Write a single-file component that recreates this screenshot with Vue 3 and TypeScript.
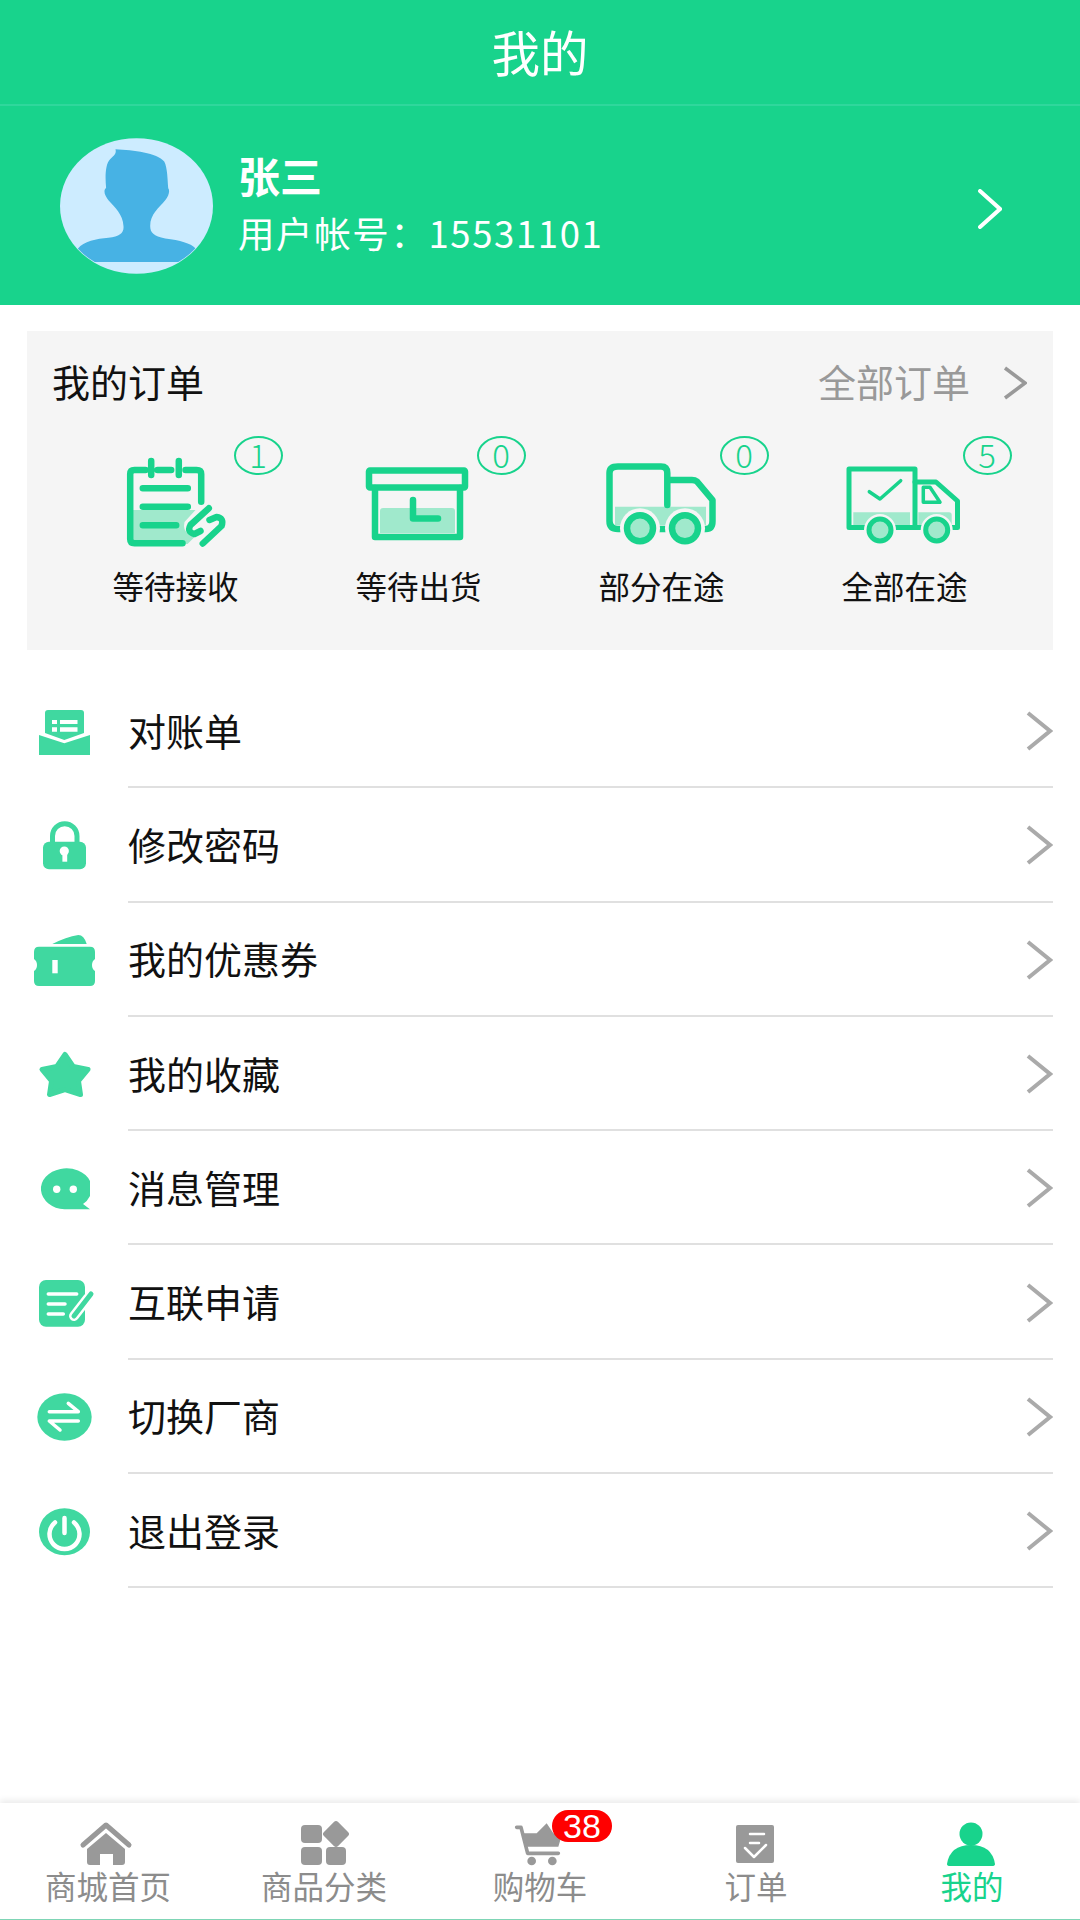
<script setup lang="ts">
const orders = [
  { name: 'receive', label: '等待接收', count: 1 },
  { name: 'ship', label: '等待出货', count: 0 },
  { name: 'partial', label: '部分在途', count: 0 },
  { name: 'all', label: '全部在途', count: 5 },
]

const menus = [
  { name: 'bill', label: '对账单' },
  { name: 'lock', label: '修改密码' },
  { name: 'coupon', label: '我的优惠券' },
  { name: 'star', label: '我的收藏' },
  { name: 'message', label: '消息管理' },
  { name: 'apply', label: '互联申请' },
  { name: 'switch', label: '切换厂商' },
  { name: 'logout', label: '退出登录' },
]

const tabs = [
  { name: 'home', label: '商城首页' },
  { name: 'category', label: '商品分类' },
  { name: 'cart', label: '购物车' },
  { name: 'order', label: '订单' },
  { name: 'mine', label: '我的' },
]
</script>

<template>
  <div class="page">
    <header class="title"><span>我的</span></header>

    <section class="profile">
      <svg class="avatar" viewBox="30 22 458 406">
        <defs>
          <clipPath id="avatar-clip"><ellipse cx="259" cy="225" rx="227" ry="201" /></clipPath>
        </defs>
        <ellipse cx="259" cy="225" rx="229" ry="203" fill="#cdecff" />
        <path
          clip-path="url(#avatar-clip)"
          fill="#47b2e4"
          d="M196 55 C250 58 320 65 342 92 C352 110 352 150 354 172 C360 180 355 195 345 208 C325 232 300 250 300 285 C300 305 310 315 345 322 C390 328 420 335 436 352 L436 393 L60 393 L84 352 C100 332 140 322 175 320 C210 315 222 305 220 285 C218 250 195 230 175 208 C165 195 158 180 168 170 C165 140 165 100 180 85 C190 75 200 70 196 55 Z"
        />
      </svg>
      <div class="profile-text">
        <div class="profile-name">张三</div>
        <div class="profile-account">用户帐号：15531101</div>
      </div>
      <svg class="profile-arrow" viewBox="0 0 24 40">
        <path d="M2 2 L22 20 L2 38" />
      </svg>
    </section>

    <section class="orders">
      <div class="orders-head">
        <span class="orders-title">我的订单</span>
        <span class="orders-more">全部订单</span>
        <svg class="orders-arrow" viewBox="0 0 24 34"><path d="M2 2 L22 17 L2 32" /></svg>
      </div>
      <div class="orders-grid">
        <div v-for="item in orders" :key="item.name" class="order-item">
          <span class="order-badge">{{ item.count }}</span>
          <svg class="order-icon" viewBox="0 0 110 92">
            <g v-if="item.name === 'receive'" transform="translate(3.5 0)">
              <path class="light" d="M8 52 H71 L60 64 Q58 72 64 76 L70 79 L63 86 H8 Z" />
              <path class="line" d="M21 12 H10 Q5.7 12 5.7 16 V81 Q5.7 85.3 10 85.3 H58" />
              <path class="line" d="M61 12 H72 Q76.7 12 76.7 16 V43.7" />
              <path class="line" d="M26.7 3 V17 M54.3 3 V17 M33 12 H46.7" />
              <path class="line" d="M18.3 30.3 H63.3 M18.3 48.7 H63.3 M18.3 67.3 H51.7" />
              <path class="line" d="M84.3 50.3 L66 67 Q62 74 70 76 L76 73" />
              <path class="line" d="M78.3 85.5 L97 68 Q100 60 92 59 L85 62" />
            </g>
            <g v-else-if="item.name === 'ship'" transform="translate(-1 0)">
              <path class="light" d="M17 53 Q17 50 20 50 H89 Q92 50 92 53 V75 H17 Z" />
              <rect class="line" x="6" y="12.5" width="96" height="17" rx="1" />
              <path class="line" d="M12 30 V79 H97 V30" />
              <path class="line" d="M50 42 V60.5 H75" />
            </g>
            <g v-else-if="item.name === 'partial'" transform="translate(-1 0)">
              <path class="light" d="M9 48.7 H100 V67 H9 Z" />
              <path class="line" d="M61.3 47 V15 Q61.3 8.5 55 8.5 H12 Q3.5 8.5 3.5 15 V63 Q3.5 71 12 71 H100 Q106.5 71 106.5 63 V42 L91 23.5 Q89 22 86 22 H61.3" />
              <circle class="gap" cx="34" cy="70.3" r="20" />
              <circle class="gap" cx="79" cy="70.3" r="20" />
              <circle class="line light-fill" cx="34" cy="70.3" r="13" />
              <circle class="line light-fill" cx="79" cy="70.3" r="13" />
            </g>
            <g v-else>
              <path class="light" d="M3.3 54.3 H60 V67 H3.3 Z M68.3 54.3 H99 Q101.7 54.3 101.7 57 V67 H68.3 Z" />
              <path class="line thin" d="M-1 11 H65 V69.5 H-1 Z" />
              <path class="line thin" d="M65 24 H86 L107.5 43 V69.5 H65" />
              <path class="line thinner" d="M19.3 33.7 L30 41 L50.7 22.7" />
              <path class="line thinner" d="M73.3 29.3 H80 L90 44.3 H73.3 Z" />
              <circle class="gap" cx="30" cy="72" r="16" />
              <circle class="gap" cx="86.7" cy="72" r="16" />
              <circle class="line thin light-fill" cx="30" cy="72" r="11" />
              <circle class="line thin light-fill" cx="86.7" cy="72" r="11" />
            </g>
          </svg>
          <div class="order-label">{{ item.label }}</div>
        </div>
      </div>
    </section>

    <ul class="menu">
      <li v-for="item in menus" :key="item.name" class="menu-row">
        <svg class="menu-icon" viewBox="0 0 70 60">
          <g v-if="item.name === 'bill'">
            <path d="M15 11 Q15 8 18 8 H51 Q54 8 54 11 V31 L34.3 38 L15 31 Z" />
            <path d="M9 33 L34.3 41.3 L60 33 V53 H9 Z" />
            <path class="cut" d="M22 18 H27 V22 H22 Z M30 18 H47.5 V22 H30 Z M22 25.3 H27 V29.7 H22 Z M30 25.3 H47.5 V29.7 H30 Z" />
          </g>
          <g v-else-if="item.name === 'lock'">
            <rect x="13" y="25.7" width="43" height="27.6" rx="6" />
            <path class="ring" d="M22.5 27 V20 A12 12 0 0 1 47 20 V27" />
            <circle class="cut" cx="34.3" cy="35" r="4.6" />
            <rect class="cut" x="32.4" y="36" width="4.8" height="9.7" />
          </g>
          <g v-else-if="item.name === 'coupon'">
            <path d="M22.3 13 Q36 6 48.3 4 Q54 4 56.7 13 Z" />
            <path d="M9 15.7 H60 Q65 15.7 65 21 V28 Q62 30 62 34 Q62 38 65 40 V50 Q65 55 60 55 H9 Q4 55 4 50 V40 Q7 38 7 34 Q7 30 4 28 V21 Q4 15.7 9 15.7 Z" />
            <rect class="cut" x="22.3" y="29" width="5.4" height="13.3" />
          </g>
          <g v-else-if="item.name === 'star'">
            <polygon class="star" points="35,9.5 43.2,21.5 58,24.5 48.5,36 50.5,49.5 35,44.5 19.5,49.5 21.5,36 12,24.5 26.8,21.5" />
          </g>
          <g v-else-if="item.name === 'message'">
            <path d="M60 22 A25.5 20.5 0 1 0 34.5 50.3 H60 L53 45 Q57.5 42 60 37 Z" />
            <circle class="cut" cx="26.7" cy="30.3" r="3.7" />
            <circle class="cut" cx="43.3" cy="30.3" r="3.7" />
          </g>
          <g v-else-if="item.name === 'apply'">
            <rect x="9" y="6" width="46" height="46.7" rx="7" />
            <path class="white-line" d="M18.3 20 H46.7 M18.3 30 H35 M18.3 40 H33.3" />
            <path class="pen-outer" d="M58 24 L44 42" />
            <path class="ring" d="M61 20 L44 42" />
          </g>
          <g v-else-if="item.name === 'switch'">
            <ellipse cx="34.5" cy="29" rx="27.2" ry="23.7" />
            <path class="white-line" d="M19.3 23.7 H48.3 L38.3 15.3 M48.3 33 H19.3 L30 42" />
          </g>
          <g v-else>
            <ellipse cx="34.5" cy="29.7" rx="25.5" ry="23.5" />
            <path class="white-line wide" d="M25 20.5 A15 15 0 1 0 44 20.5 M34.5 16 V31" />
          </g>
        </svg>
        <div class="menu-body">
          <span class="menu-text">{{ item.label }}</span>
          <svg class="menu-arrow" viewBox="0 0 27 40"><path d="M2 2 L24 20 L2 38" /></svg>
        </div>
      </li>
    </ul>

    <nav class="tabbar">
      <div v-for="(tab, i) in tabs" :key="tab.name" class="tab" :class="{ active: i === 4 }">
        <span v-if="tab.name === 'cart'" class="cart-badge">38</span>
        <svg v-if="tab.name === 'cart'" class="tab-icon" viewBox="15 45 180 144">
          <path class="cart-line" d="M35 67 H48 L68 145 H160" />
          <path d="M52 85 H95 L125 55 L145 85 H172 L160 125 H62 Z" />
          <circle cx="80" cy="168" r="13" />
          <circle cx="142" cy="168" r="13" />
        </svg>
        <svg v-else class="tab-icon" viewBox="0 0 60 48">
          <g v-if="tab.name === 'home'">
            <path class="home-roof" d="M5 25 L28 5 L51 25" />
            <path d="M28 13 L47 29 V42 Q47 45 44 45 H35 V34 H22 V45 H12 Q9 45 9 42 V29 Z" />
          </g>
          <g v-else-if="tab.name === 'category'">
            <rect x="7" y="5" width="21" height="18" rx="4" />
            <rect x="32" y="1" width="20" height="20" rx="3" transform="rotate(45 42 14) translate(0 3)" />
            <rect x="7" y="27" width="21" height="18" rx="4" />
            <rect x="32" y="27" width="20" height="18" rx="4" />
          </g>
          <g v-else-if="tab.name === 'order'">
            <rect x="10" y="5" width="38" height="38" rx="2" />
            <path class="tab-cut" d="M24 14 H38 M24 23 H33 M19 28 L28 37 L40 25" />
          </g>
          <g v-else>
            <circle cx="29" cy="14" r="11.5" />
            <path d="M5 44 Q8 25 29 25 Q50 25 53 44 Q53 46 50 46 H8 Q5 46 5 44 Z" />
          </g>
        </svg>
        <div class="tab-label">{{ tab.label }}</div>
      </div>
    </nav>
  </div>
</template>

<style scoped>
.page {
  min-height: 1920px;
  display: flex;
  flex-direction: column;
  background: #fff;
  font-family: 'Noto Sans CJK SC', 'Noto Sans', sans-serif;
  color: #111;
}

.title {
  height: 104px;
  line-height: 102px;
  text-align: center;
  background: #18d38c;
  color: #fff;
  font-size: 48.5px;
  border-bottom: 2px solid #2fd79c;
}

.profile {
  height: 199px;
  display: flex;
  align-items: center;
  padding: 0 78px 0 60px;
  background: #18d38c;
  color: #fff;
}

.avatar {
  width: 153px;
  height: 136px;
  flex: none;
}

.profile-text {
  margin-left: 25px;
  margin-bottom: 4px;
}

.profile-name {
  font-size: 42px;
  font-weight: 700;
  line-height: 50px;
}

.profile-account {
  margin-top: 8px;
  font-size: 36.5px;
  line-height: 50px;
  letter-spacing: 1.6px;
}

.profile-arrow {
  width: 24px;
  height: 40px;
  margin-left: auto;
  margin-top: 6px;
  fill: none;
  stroke: #fff;
  stroke-width: 4;
  stroke-linecap: round;
}

.orders {
  margin: 26px 27px 0;
  height: 319px;
  background: #f5f5f5;
}

.orders-head {
  height: 105px;
  display: flex;
  align-items: center;
  padding: 0 26px 0 25px;
  font-size: 38px;
  line-height: 44px;
}

.orders-title,
.orders-more {
  margin-bottom: 6px;
}

.orders-more {
  margin-left: auto;
  color: #999;
}

.orders-arrow {
  width: 24px;
  height: 34px;
  margin-left: 33px;
  margin-bottom: 2px;
  fill: none;
  stroke: #999;
  stroke-width: 3.5;
}

.orders-grid {
  display: grid;
  grid-template-columns: repeat(4, 243px);
  padding-left: 27px;
}

.order-item {
  position: relative;
  height: 171px;
  padding-top: 22px;
  box-sizing: border-box;
  text-align: center;
}

.order-badge {
  position: absolute;
  top: 0;
  left: calc(50% + 58px);
  width: 49px;
  height: 39px;
  box-sizing: border-box;
  border: 2px solid #18d38c;
  border-radius: 50%;
  color: #18d38c;
  font-size: 33px;
  line-height: 33px;
  font-weight: 300;
  text-align: center;
}

.order-icon {
  display: block;
  width: 110px;
  height: 92px;
  margin: 0 auto;
  overflow: visible;
}

.order-icon .line {
  fill: none;
  stroke: #18d38c;
  stroke-width: 6.5;
  stroke-linecap: round;
  stroke-linejoin: round;
}

.order-icon .thin {
  stroke-width: 5;
}

.order-icon .thinner {
  stroke-width: 3.5;
}

.order-icon .light {
  fill: #a0e9cc;
}

.order-icon .light-fill {
  fill: #a0e9cc;
}

.order-icon .gap {
  fill: #f5f5f5;
}

.order-label {
  margin-top: 13px;
  font-size: 31.5px;
  line-height: 44px;
}

.menu {
  list-style: none;
  margin: 24px 0 0;
  padding: 0;
}

.menu-row {
  display: flex;
  align-items: center;
  height: 114.3px;
}

.menu-icon {
  flex: none;
  width: 70px;
  height: 60px;
  margin: 2px 28px 0 30px;
  fill: #40d8a0;
  overflow: visible;
}

.menu-icon .cut {
  fill: #fff;
}

.menu-icon .ring {
  fill: none;
  stroke: #40d8a0;
  stroke-width: 5;
  stroke-linecap: round;
}

.menu-icon .star {
  stroke: #40d8a0;
  stroke-width: 5;
  stroke-linejoin: round;
}

.menu-icon .white-line {
  fill: none;
  stroke: #fff;
  stroke-width: 3.5;
  stroke-linecap: round;
  stroke-linejoin: round;
}

.menu-icon .wide {
  stroke-width: 4.5;
}

.menu-icon .pen-outer {
  fill: none;
  stroke: #fff;
  stroke-width: 10;
  stroke-linecap: round;
}

.menu-body {
  flex: 1;
  height: 100%;
  display: flex;
  align-items: center;
  justify-content: space-between;
  box-sizing: border-box;
  margin-right: 27px;
  border-bottom: 2px solid #e0e0e0;
  font-size: 38px;
}

.menu-text {
  margin-bottom: 2px;
}

.menu-arrow {
  width: 27px;
  height: 40px;
  margin-top: 2px;
  fill: none;
  stroke: #aaa;
  stroke-width: 4;
}

.tabbar {
  margin-top: auto;
  height: 117px;
  box-sizing: border-box;
  display: grid;
  grid-template-columns: repeat(5, 1fr);
  border-bottom: 1px solid #7fd5b5;
  box-shadow: 0 -3px 6px rgba(0, 0, 0, 0.08);
  background: #fff;
}

.tab {
  position: relative;
  padding-top: 17px;
  text-align: center;
  color: #8c8c8c;
}

.tab.active {
  color: #18d38c;
}

.tab-icon {
  display: block;
  width: 60px;
  height: 48px;
  margin: 0 auto;
  fill: #999;
}

.tab.active .tab-icon {
  fill: #18d38c;
}

.home-roof {
  fill: none;
  stroke: #999;
  stroke-width: 5;
  stroke-linecap: round;
  stroke-linejoin: round;
}

.cart-line {
  fill: none;
  stroke: #999;
  stroke-width: 11;
  stroke-linecap: round;
  stroke-linejoin: round;
}

.tab-cut {
  fill: none;
  stroke: #fff;
  stroke-width: 2.5;
  stroke-linecap: round;
  stroke-linejoin: round;
}

.tab-label {
  margin-top: -3px;
  font-size: 31.5px;
  line-height: 40px;
}

.cart-badge {
  position: absolute;
  z-index: 1;
  top: 7px;
  left: 120px;
  width: 60px;
  height: 32px;
  border-radius: 16px;
  background: #f00;
  color: #fff;
  font-family: 'Liberation Sans', sans-serif;
  font-size: 34px;
  line-height: 32px;
}
</style>
